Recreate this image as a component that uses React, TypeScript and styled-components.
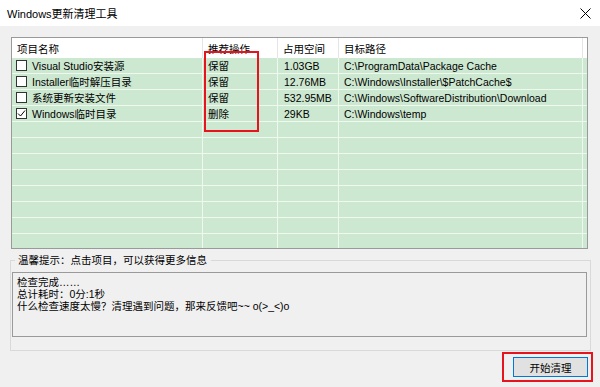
import React from 'react';
import styled, { createGlobalStyle } from 'styled-components';

const Global = createGlobalStyle`
  html, body { margin: 0; padding: 0; background: #f0f0f0; }
  body {
    font-family: "Liberation Sans", "Noto Sans CJK SC", sans-serif;
    font-size: 10.5px;
    color: #000;
  }
  * { box-sizing: border-box; }
`;

const Window = styled.div`
  width: 600px;
  height: 387px;
  display: flex;
  flex-direction: column;
  background: #f0f0f0;
  overflow: hidden;
`;

const TitleBar = styled.div`
  height: 26px;
  flex: none;
  background: #ffffff;
  display: flex;
  align-items: center;
  justify-content: space-between;
  padding: 0 9px 0 7px;
  font-size: 11px;
`;

const Body = styled.div`
  display: flex;
  flex-direction: column;
  padding: 11px 12px 0 11px;
`;

const ListView = styled.div`
  position: relative;
  height: 212px;
  border: 1px solid #9a9a9a;
  background: #cde8d0;
  overflow: hidden;
`;

const COLS = '191px 75px 61px 244px 1fr';

const HeaderRow = styled.div`
  display: grid;
  grid-template-columns: ${COLS};
  height: 20px;
  background: #ffffff;
`;

const HeaderCell = styled.div<{ $pad: number }>`
  display: flex;
  align-items: center;
  padding-left: ${p => p.$pad}px;
  border-right: 1px solid #e5e5e5;
  white-space: nowrap;
  &:last-child { border-right: none; }
`;

const Row = styled.div`
  display: grid;
  grid-template-columns: ${COLS};
  height: 16px;
`;

const Cell = styled.div<{ $pad: number }>`
  display: flex;
  align-items: center;
  padding-left: ${p => p.$pad}px;
  border-right: 1px solid #eef8ef;
  border-bottom: 1px solid #eef8ef;
  white-space: nowrap;
  overflow: hidden;
  &:last-child { border-right: none; }
`;

const Check = styled.span`
  width: 11px;
  height: 11px;
  flex: none;
  border: 1px solid #333;
  background: #fff;
  margin-right: 5px;
  display: flex;
  align-items: center;
  justify-content: center;
`;

const Annotation = styled.div`
  position: absolute;
  left: 192px;
  top: 13px;
  width: 55px;
  height: 81px;
  border: 2px solid #e6141c;
  pointer-events: none;
`;

const Group = styled.fieldset`
  margin: 5px -3px 0 -1px;
  padding: 0 0 13px 1px;
  border: 1px solid #d9d9d9;
  min-width: 0;
`;

const Legend = styled.legend`
  margin-left: 3px;
  padding: 0 4px 0 3px;
  line-height: 13px;
  font-size: 10.5px;
`;

const InfoBox = styled.div`
  margin: 5px 3px 0 0;
  height: 65px;
  border: 1px solid #9a9a9a;
  padding: 3px 4px;
  line-height: 12px;
  background: #f0f0f0;
`;

const ButtonRow = styled.div`
  display: flex;
  justify-content: flex-end;
  margin: 1px -5px 0 0;
`;

const RedFrame = styled.div`
  border: 2px solid #e6141c;
  padding: 3px 3px 3px 9px;
`;

const Button = styled.button`
  width: 75px;
  height: 20px;
  border: 1px solid #0078d7;
  background: #e1e1e1;
  font-family: "Liberation Sans", "Noto Sans CJK SC", sans-serif;
  font-size: 10.5px;
  color: #000;
  padding: 0;
  display: flex;
  align-items: center;
  justify-content: center;
`;

const items = [
  { name: 'Visual Studio安装源', op: '保留', size: '1.03GB', path: 'C:\\ProgramData\\Package Cache', checked: false },
  { name: 'Installer临时解压目录', op: '保留', size: '12.76MB', path: 'C:\\Windows\\Installer\\$PatchCache$', checked: false },
  { name: '系统更新安装文件', op: '保留', size: '532.95MB', path: 'C:\\Windows\\SoftwareDistribution\\Download', checked: false },
  { name: 'Windows临时目录', op: '删除', size: '29KB', path: 'C:\\Windows\\temp', checked: true },
];

const CloseIcon = () => (
  <svg width="11" height="11" viewBox="0 0 11 11">
    <path d="M0.5 0.5 L10.5 10.5 M10.5 0.5 L0.5 10.5" stroke="#000" strokeWidth="1" fill="none" />
  </svg>
);

const CheckMark = () => (
  <svg width="9" height="9" viewBox="0 0 9 9">
    <path d="M1 4.5 L3.5 7 L8 1.5" stroke="#000" strokeWidth="1" fill="none" />
  </svg>
);

export default function App() {
  const fillers = Array.from({ length: 9 });
  return (
    <>
      <Global />
      <Window>
        <TitleBar>
          <span>Windows更新清理工具</span>
          <CloseIcon />
        </TitleBar>
        <Body>
          <ListView>
            <HeaderRow>
              <HeaderCell $pad={5}>项目名称</HeaderCell>
              <HeaderCell $pad={5}>推荐操作</HeaderCell>
              <HeaderCell $pad={5}>占用空间</HeaderCell>
              <HeaderCell $pad={5}>目标路径</HeaderCell>
              <HeaderCell $pad={0} />
            </HeaderRow>
            {items.map(it => (
              <Row key={it.name}>
                <Cell $pad={4}>
                  <Check>{it.checked && <CheckMark />}</Check>
                  {it.name}
                </Cell>
                <Cell $pad={5}>{it.op}</Cell>
                <Cell $pad={6}>{it.size}</Cell>
                <Cell $pad={5}>{it.path}</Cell>
                <Cell $pad={0} />
              </Row>
            ))}
            {fillers.map((_, i) => (
              <Row key={i}>
                <Cell $pad={0} />
                <Cell $pad={0} />
                <Cell $pad={0} />
                <Cell $pad={0} />
                <Cell $pad={0} />
              </Row>
            ))}
            <Annotation />
          </ListView>
          <Group>
            <Legend>温馨提示：点击项目，可以获得更多信息</Legend>
            <InfoBox>
              <div>检查完成……</div>
              <div>总计耗时：0分:1秒</div>
              <div>什么检查速度太慢？清理遇到问题，那来反馈吧~~ o(&gt;_&lt;)o</div>
            </InfoBox>
          </Group>
          <ButtonRow>
            <RedFrame>
              <Button>开始清理</Button>
            </RedFrame>
          </ButtonRow>
        </Body>
      </Window>
    </>
  );
}
